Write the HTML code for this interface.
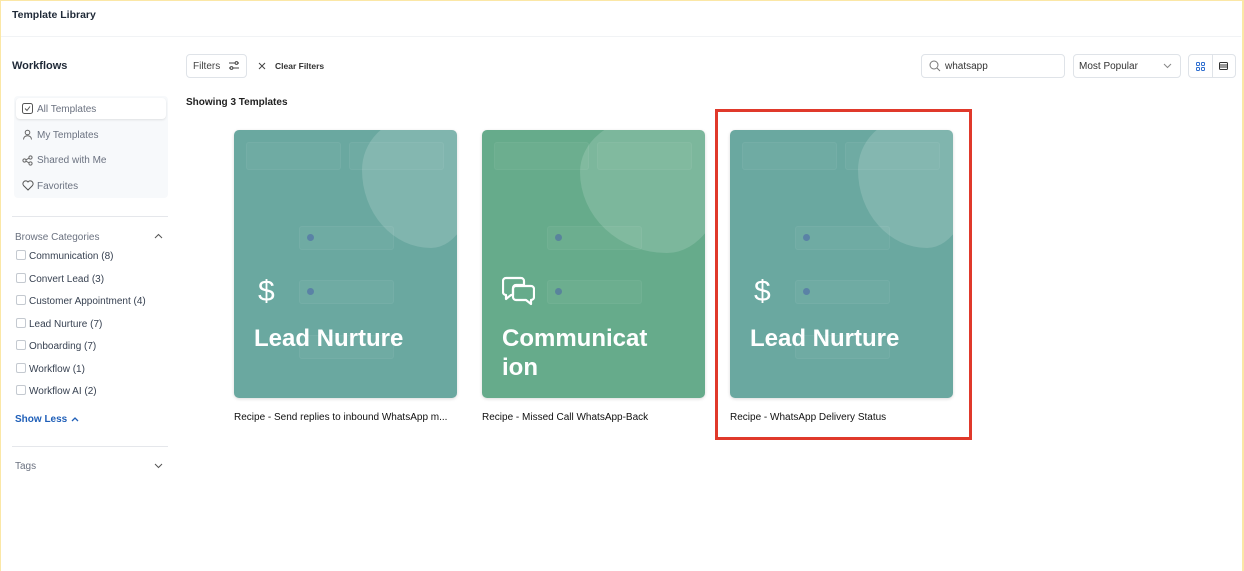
<!DOCTYPE html>
<html><head><meta charset="utf-8"><style>
*{box-sizing:border-box;margin:0;padding:0}
body{width:1244px;height:571px;overflow:hidden;background:#fff;font-family:"Liberation Sans",sans-serif;color:#1f2937;position:relative}
.frame{position:absolute;left:0;top:0;width:1244px;height:571px;border-top:1px solid #fbe7a6;border-left:1px solid #fbe7a6;border-right:2px solid #fbe7a6}
.a{position:absolute}
.hdr{left:1px;top:1px;width:1240px;height:36px;border-bottom:1px solid #f1f3f5}
.t{font-size:10.5px;font-weight:bold;white-space:nowrap}
.s{font-size:10px;color:#374151;white-space:nowrap}
.nav{left:14px;top:96px;width:154px;height:102px;background:#f7f9fb;border-radius:4px}
.navsel{left:16px;top:98px;width:150px;height:21px;background:#fff;border-radius:4px;box-shadow:0 1px 2px rgba(0,0,0,.1)}
.navi{font-size:10px;color:#6b7280;white-space:nowrap}
.cb{width:10px;height:10px;border:1px solid #c4c9d0;border-radius:2px}
.card{top:130px;width:223px;height:268px;border-radius:5px;overflow:hidden;box-shadow:0 1px 3px rgba(0,0,0,.15)}
.blob{position:absolute;left:128px;top:-12px;width:115px;height:130px;background:rgba(255,255,255,.15);border-radius:45% 40% 40% 60%/40% 40% 60% 60%}
.fb{position:absolute;background:rgba(255,255,255,.04);border:1px solid rgba(255,255,255,.04);border-radius:3px}
.dot{position:absolute;width:7px;height:7px;border-radius:50%;background:rgba(70,90,170,.5)}
.ct{position:absolute;left:20px;color:#fff;font-size:24px;font-weight:bold;line-height:29px}
.cap{top:412px;font-size:10px;color:#111;white-space:nowrap}
.btn{border:1px solid #dfe3e8;border-radius:4px;background:#fff}
</style></head><body>
<div class="frame"></div>
<div class="a hdr"></div>
<div class="a t" style="left:12px;top:9px">Template Library</div>
<div class="a t" style="left:12px;top:60px;font-size:11px;font-weight:600">Workflows</div>

<div class="a nav"></div>
<div class="a navsel"></div>
<svg class="a" style="left:22px;top:103px" width="11" height="11" viewBox="0 0 11 11"><rect x=".5" y=".5" width="10" height="10" rx="2" fill="none" stroke="#555"/><path d="M3 5.5l2 2 3-4" fill="none" stroke="#555"/></svg>
<div class="a navi" style="left:37px;top:104px">All Templates</div>
<svg class="a" style="left:22px;top:129px" width="11" height="11" viewBox="0 0 11 11"><circle cx="5.5" cy="3.5" r="2.3" fill="none" stroke="#666"/><path d="M1.5 10.5c0-2.5 2-3.8 4-3.8s4 1.3 4 3.8" fill="none" stroke="#666"/></svg>
<div class="a navi" style="left:37px;top:130px">My Templates</div>
<svg class="a" style="left:22px;top:155px" width="11" height="11" viewBox="0 0 11 11"><circle cx="2.5" cy="5.5" r="1.6" fill="none" stroke="#666"/><circle cx="8.5" cy="2.5" r="1.6" fill="none" stroke="#666"/><circle cx="8.5" cy="8.5" r="1.6" fill="none" stroke="#666"/><path d="M4 4.8l3-1.6M4 6.2l3 1.6" stroke="#666"/></svg>
<div class="a navi" style="left:37px;top:155px">Shared with Me</div>
<svg class="a" style="left:22px;top:180px" width="12" height="11" viewBox="0 0 12 11"><path d="M6 10L1.5 5.5A2.6 2.6 0 016 2a2.6 2.6 0 014.5 3.5z" fill="none" stroke="#555"/></svg>
<div class="a navi" style="left:37px;top:181px">Favorites</div>

<div class="a" style="left:12px;top:216px;width:156px;height:1px;background:#e5e7eb"></div>
<div class="a navi" style="left:15px;top:232px">Browse Categories</div>
<svg class="a" style="left:154px;top:233px" width="9" height="6" viewBox="0 0 9 6"><path d="M1 5l3.5-3.5L8 5" fill="none" stroke="#555"/></svg>
<div class="a cb" style="left:16px;top:250px"></div><div class="a s" style="left:29px;top:251px">Communication (8)</div>
<div class="a cb" style="left:16px;top:273px"></div><div class="a s" style="left:29px;top:274px">Convert Lead (3)</div>
<div class="a cb" style="left:16px;top:295px"></div><div class="a s" style="left:29px;top:296px">Customer Appointment (4)</div>
<div class="a cb" style="left:16px;top:318px"></div><div class="a s" style="left:29px;top:319px">Lead Nurture (7)</div>
<div class="a cb" style="left:16px;top:340px"></div><div class="a s" style="left:29px;top:341px">Onboarding (7)</div>
<div class="a cb" style="left:16px;top:363px"></div><div class="a s" style="left:29px;top:364px">Workflow (1)</div>
<div class="a cb" style="left:16px;top:385px"></div><div class="a s" style="left:29px;top:386px">Workflow AI (2)</div>
<div class="a" style="left:15px;top:414px;font-size:10px;font-weight:bold;color:#1f5fb8">Show Less</div>
<svg class="a" style="left:71px;top:416px" width="8" height="6" viewBox="0 0 8 6"><path d="M1 5l3-3 3 3" fill="none" stroke="#1f5fb8" stroke-width="1.3"/></svg>
<div class="a" style="left:12px;top:446px;width:156px;height:1px;background:#e5e7eb"></div>
<div class="a navi" style="left:15px;top:461px">Tags</div>
<svg class="a" style="left:154px;top:463px" width="9" height="6" viewBox="0 0 9 6"><path d="M1 1l3.5 3.5L8 1" fill="none" stroke="#555"/></svg>

<div class="a btn" style="left:186px;top:54px;width:61px;height:24px"></div>
<div class="a s" style="left:193px;top:61px;color:#444">Filters</div>
<svg class="a" style="left:228px;top:60px" width="12" height="11" viewBox="0 0 12 11"><path d="M1 3h6M10 3h1M1 8h1M5 8h6" stroke="#444"/><circle cx="8.5" cy="3" r="1.4" fill="none" stroke="#444"/><circle cx="3.5" cy="8" r="1.4" fill="none" stroke="#444"/></svg>
<svg class="a" style="left:258px;top:62px" width="8" height="8" viewBox="0 0 8 8"><path d="M1 1l6 6M7 1l-6 6" stroke="#444"/></svg>
<div class="a" style="left:275px;top:61px;font-size:8.5px;font-weight:bold;color:#333">Clear Filters</div>
<div class="a" style="left:186px;top:97px;font-size:10px;font-weight:600;color:#222">Showing 3 Templates</div>

<div class="a btn" style="left:921px;top:54px;width:144px;height:24px"></div>
<svg class="a" style="left:929px;top:60px" width="12" height="12" viewBox="0 0 12 12"><circle cx="5" cy="5" r="4" fill="none" stroke="#777"/><path d="M8 8l3 3" stroke="#777"/></svg>
<div class="a s" style="left:945px;top:61px;color:#333">whatsapp</div>
<div class="a btn" style="left:1073px;top:54px;width:108px;height:24px"></div>
<div class="a s" style="left:1079px;top:61px;color:#333">Most Popular</div>
<svg class="a" style="left:1163px;top:63px" width="9" height="6" viewBox="0 0 9 6"><path d="M1 1l3.5 3.5L8 1" fill="none" stroke="#888"/></svg>
<div class="a btn" style="left:1188px;top:54px;width:48px;height:24px"></div>
<div class="a" style="left:1212px;top:54px;width:1px;height:24px;background:#dfe3e8"></div>
<svg class="a" style="left:1196px;top:62px" width="9" height="9" viewBox="0 0 9 9" fill="none" stroke="#2f6fd0"><rect x=".5" y=".5" width="3" height="3" rx=".7"/><rect x="5.5" y=".5" width="3" height="3" rx=".7"/><rect x=".5" y="5.5" width="3" height="3" rx=".7"/><rect x="5.5" y="5.5" width="3" height="3" rx=".7"/></svg>
<svg class="a" style="left:1219px;top:62px" width="9" height="8" viewBox="0 0 9 8" fill="none" stroke="#333"><rect x=".5" y=".5" width="8" height="7" rx="1"/><path d="M.5 3h8M.5 5h8"/></svg>

<!-- card 1 -->
<div class="a card" style="left:234px;background:#6aa8a0">
 <div class="fb" style="left:12px;top:12px;width:95px;height:28px"></div>
 <div class="fb" style="left:115px;top:12px;width:95px;height:28px"></div>
 <div class="fb" style="left:65px;top:96px;width:95px;height:24px"></div><div class="dot" style="left:73px;top:104px"></div>
 <div class="fb" style="left:65px;top:150px;width:95px;height:24px"></div><div class="dot" style="left:73px;top:158px"></div>
 <div class="fb" style="left:65px;top:205px;width:95px;height:24px"></div>
 <div class="blob"></div>
 <div class="ct" style="top:147px;font-size:30px;font-weight:normal;left:24px">$</div>
 <div class="ct" style="top:194px">Lead Nurture</div>
</div>
<div class="a cap" style="left:234px">Recipe - Send replies to inbound WhatsApp m...</div>

<!-- card 2 -->
<div class="a card" style="left:482px;background:#66ab8b">
 <div class="fb" style="left:12px;top:12px;width:95px;height:28px"></div>
 <div class="fb" style="left:115px;top:12px;width:95px;height:28px"></div>
 <div class="fb" style="left:65px;top:96px;width:95px;height:24px"></div><div class="dot" style="left:73px;top:104px"></div>
 <div class="fb" style="left:65px;top:150px;width:95px;height:24px"></div><div class="dot" style="left:73px;top:158px"></div>
 <div class="blob" style="left:98px;width:145px;height:135px"></div>
 <svg style="position:absolute;left:20px;top:146px" width="33" height="32" viewBox="0 0 33 32" fill="none" stroke="#fff" stroke-width="2.2" stroke-linejoin="round"><path d="M4 2h15a3 3 0 013 3v4H14a3 3 0 00-3 3v7H9l-5 4v-4a3 3 0 01-3-3V5a3 3 0 013-3z"/><path d="M14 10h15a3 3 0 013 3v8a3 3 0 01-3 3v4l-5-4h-10a3 3 0 01-3-3v-8a3 3 0 013-3z"/></svg>
 <div class="ct" style="top:194px">Communicat<br>ion</div>
</div>
<div class="a cap" style="left:482px">Recipe - Missed Call WhatsApp-Back</div>

<!-- card 3 -->
<div class="a card" style="left:730px;background:#6aa8a0">
 <div class="fb" style="left:12px;top:12px;width:95px;height:28px"></div>
 <div class="fb" style="left:115px;top:12px;width:95px;height:28px"></div>
 <div class="fb" style="left:65px;top:96px;width:95px;height:24px"></div><div class="dot" style="left:73px;top:104px"></div>
 <div class="fb" style="left:65px;top:150px;width:95px;height:24px"></div><div class="dot" style="left:73px;top:158px"></div>
 <div class="fb" style="left:65px;top:205px;width:95px;height:24px"></div>
 <div class="blob"></div>
 <div class="ct" style="top:147px;font-size:30px;font-weight:normal;left:24px">$</div>
 <div class="ct" style="top:194px">Lead Nurture</div>
</div>
<div class="a cap" style="left:730px">Recipe - WhatsApp Delivery Status</div>

<div class="a" style="left:715px;top:109px;width:257px;height:331px;border:3px solid #e0392b"></div>
</body></html>
